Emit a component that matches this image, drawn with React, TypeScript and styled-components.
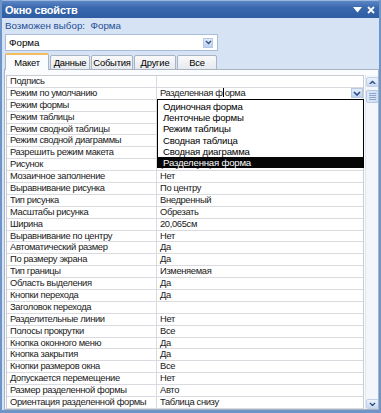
import React from "react";
import styled, { createGlobalStyle } from "styled-components";

const Global = createGlobalStyle`
  html, body { margin: 0; padding: 0; background: #dbe6f4; }
  * { box-sizing: border-box; }
`;

const FONT = `"Liberation Sans", Arial, sans-serif`;

const Window = styled.div`
  width: 381px;
  height: 413px;
  background: #d6e3f4;
  border-left: 2px solid #6f94c8;
  border-right: 2px solid #6f94c8;
  border-bottom: 3px solid #6f94c8;
  display: flex;
  flex-direction: column;
  overflow: hidden;
  font-family: ${FONT};
`;

const TitleBar = styled.div`
  height: 18px;
  flex: none;
  margin: 0 -2px;
  padding: 0 6px 0 5px;
  background: linear-gradient(#5b86c5, #3a68ad 40%, #2f5da3);
  border-top: 1px solid #9ab6de;
  display: flex;
  align-items: center;
  justify-content: space-between;
`;

const Title = styled.span`
  color: #fff;
  font-weight: bold;
  font-size: 11px;
  letter-spacing: -0.2px;
`;

const TitleIcons = styled.div`
  display: flex;
  align-items: center;
  gap: 5px;
`;

const Info = styled.div`
  color: #1f4e94;
  font-size: 9.8px;
  padding: 2px 0 0 3px;
  height: 14px;
  flex: none;
`;

const SelectBox = styled.div`
  margin: 2px 0 0 3px;
  width: 213px;
  height: 17px;
  flex: none;
  background: #fff;
  border: 1px solid #a9bdd8;
  display: flex;
  align-items: center;
  justify-content: space-between;
  padding: 0 4px 0 3px;
  font-size: 9.8px;
  color: #000;
`;

const DropBtn = styled.div<{ $w: number; $h: number }>`
  width: ${(p) => p.$w}px;
  height: ${(p) => p.$h}px;
  background: linear-gradient(#e3ecf9, #bcd0ee);
  border: 1px solid #b6c9e6;
  display: flex;
  align-items: center;
  justify-content: center;
`;

const Tabs = styled.div`
  display: flex;
  align-items: flex-end;
  margin: 2px 0 0 3px;
  height: 17px;
  flex: none;
`;

const Tab = styled.div<{ $w: number; $active?: boolean }>`
  width: ${(p) => p.$w}px;
  height: ${(p) => (p.$active ? 17 : 15)}px;
  margin-right: 1px;
  display: flex;
  align-items: center;
  justify-content: center;
  font-size: 9.4px;
  letter-spacing: -0.2px;
  color: #000;
  background: ${(p) => (p.$active ? "#fbfcfe" : "linear-gradient(#fafafa, #e6e9ee)")};
  border: 1px solid #a9b3c2;
  border-top: ${(p) => (p.$active ? "2px solid #f2bd62" : "1px solid #a9b3c2")};
  border-bottom: ${(p) => (p.$active ? "none" : "1px solid #a9b3c2")};
  position: relative;
  z-index: ${(p) => (p.$active ? 2 : 1)};
  border-radius: 2px 2px 0 0;
`;

const Panel = styled.div`
  flex: 1;
  margin: -1px 0 0 2px;
  background: #fbfcfe;
  border: 1px solid #a9b3c2;
  padding: 5px 0 0 1px;
  display: flex;
  overflow: hidden;
`;

const GridWrap = styled.div`
  position: relative;
  width: 358px;
  flex: none;
  border-top: 1px solid #c9ccd2;
  border-left: 1px solid #c9ccd2;
  border-right: 1px solid #c9ccd2;
  background: #fff;
`;

const Row = styled.div`
  display: grid;
  grid-template-columns: 150px 1fr;
  height: 11.9px;
  border-bottom: 1px solid #d9dbe0;
  font-size: 9.4px;
  letter-spacing: -0.35px;
  line-height: 10.9px;
  color: #1a1a1a;
`;

const Label = styled.div`
  padding-left: 3px;
  border-right: 1px solid #d9dbe0;
  white-space: nowrap;
  overflow: hidden;
`;

const Value = styled.div`
  padding-left: 3px;
  white-space: nowrap;
  overflow: hidden;
  display: flex;
  align-items: center;
  justify-content: space-between;
`;

const Caret = styled.span`
  display: inline-block;
  width: 1px;
  height: 10px;
  background: #000;
  vertical-align: -1px;
  margin: 0 0.5px;
`;

const List = styled.div`
  position: absolute;
  left: 150px;
  top: 23px;
  width: 207px;
  height: 69px;
  background: #fff;
  border: 1px solid #000;
  z-index: 5;
  padding-top: 1px;
`;

const Item = styled.div<{ $sel?: boolean }>`
  height: 11.2px;
  line-height: 11.2px;
  font-size: 9.6px;
  letter-spacing: -0.2px;
  padding-left: 5px;
  color: ${(p) => (p.$sel ? "#fff" : "#000")};
  background: ${(p) => (p.$sel ? "#050505" : "transparent")};
`;

const Scroll = styled.div`
  width: 16px;
  margin-left: 1px;
  background: #f3f6fa;
  border-left: 1px solid #e2e7ee;
  display: flex;
  flex-direction: column;
  align-items: center;
  padding-top: 1px;
  position: relative;
`;

const ScrollBtn = styled.div`
  width: 13px;
  height: 10px;
  margin-top: 1px;
  background: linear-gradient(#eef3fb, #c8d8f0);
  border: 1px solid #c2d1e8;
  border-radius: 2px;
  display: flex;
  align-items: center;
  justify-content: center;
`;

const Thumb = styled.div`
  width: 13px;
  height: 13px;
  margin-top: 3px;
  background: linear-gradient(90deg, #dfe8f6, #cddcf2);
  border: 1px solid #b4c7e4;
  border-radius: 2px;
  display: flex;
  flex-direction: column;
  align-items: center;
  justify-content: center;
  gap: 1px;
`;

const Grip = styled.div`
  width: 7px;
  height: 1px;
  background: #8ea7cc;
`;

const Spacer = styled.div`
  flex: 1;
`;

const Chevron = ({ up, size = 8 }: { up?: boolean; size?: number }) => (
  <svg width={size} height={size * 0.7} viewBox="0 0 8 5.6">
    <path
      d={up ? "M1 4.6 L4 1.6 L7 4.6" : "M1 1 L4 4 L7 1"}
      fill="none"
      stroke="#2a4d85"
      strokeWidth="1.6"
    />
  </svg>
);

const rows: [string, string][] = [
  ["Подпись", ""],
  ["Режим по умолчанию", "__CARET__"],
  ["Режим формы", ""],
  ["Режим таблицы", ""],
  ["Режим сводной таблицы", ""],
  ["Режим сводной диаграммы", ""],
  ["Разрешить режим макета", ""],
  ["Рисунок", "(отсутствует)"],
  ["Мозаичное заполнение", "Нет"],
  ["Выравнивание рисунка", "По центру"],
  ["Тип рисунка", "Внедренный"],
  ["Масштабы рисунка", "Обрезать"],
  ["Ширина", "20,065см"],
  ["Выравнивание по центру", "Нет"],
  ["Автоматический размер", "Да"],
  ["По размеру экрана", "Да"],
  ["Тип границы", "Изменяемая"],
  ["Область выделения", "Да"],
  ["Кнопки перехода", "Да"],
  ["Заголовок перехода", ""],
  ["Разделительные линии", "Нет"],
  ["Полосы прокрутки", "Все"],
  ["Кнопка оконного меню", "Да"],
  ["Кнопка закрытия", "Да"],
  ["Кнопки размеров окна", "Все"],
  ["Допускается перемещение", "Нет"],
  ["Размер разделенной формы", "Авто"],
  ["Ориентация разделенной формы", "Таблица снизу"],
];

const options = [
  "Одиночная форма",
  "Ленточные формы",
  "Режим таблицы",
  "Сводная таблица",
  "Сводная диаграмма",
  "Разделенная форма",
];

export default function App() {
  return (
    <>
      <Global />
      <Window>
        <TitleBar>
          <Title>Окно свойств</Title>
          <TitleIcons>
            <svg width="9" height="6" viewBox="0 0 9 6">
              <path d="M0 0 H9 L4.5 5.5 Z" fill="#fff" />
            </svg>
            <svg width="8" height="8" viewBox="0 0 8 8">
              <path d="M1 1 L7 7 M7 1 L1 7" stroke="#fff" strokeWidth="1.8" />
            </svg>
          </TitleIcons>
        </TitleBar>
        <Info>Возможен выбор:&nbsp; Форма</Info>
        <SelectBox>
          <span>Форма</span>
          <DropBtn $w={10} $h={10}>
            <Chevron size={7} />
          </DropBtn>
        </SelectBox>
        <Tabs>
          <Tab $w={44} $active>Макет</Tab>
          <Tab $w={40}>Данные</Tab>
          <Tab $w={42}>События</Tab>
          <Tab $w={42}>Другие</Tab>
          <Tab $w={40}>Все</Tab>
        </Tabs>
        <Panel>
          <GridWrap>
            {rows.map(([l, v]) => (
              <Row key={l}>
                <Label>{l}</Label>
                {v === "__CARET__" ? (
                  <Value>
                    <span>
                      Разделенная ф<Caret />орма
                    </span>
                    <DropBtn $w={12} $h={10}>
                      <Chevron size={8} />
                    </DropBtn>
                  </Value>
                ) : (
                  <Value>{v}</Value>
                )}
              </Row>
            ))}
            <List>
              {options.map((o, i) => (
                <Item key={o} $sel={i === options.length - 1}>
                  {o}
                </Item>
              ))}
            </List>
          </GridWrap>
          <Scroll>
            <ScrollBtn>
              <Chevron up size={7} />
            </ScrollBtn>
            <Thumb>
              <Grip />
              <Grip />
              <Grip />
              <Grip />
            </Thumb>
            <Spacer />
            <ScrollBtn>
              <Chevron size={7} />
            </ScrollBtn>
          </Scroll>
        </Panel>
      </Window>
    </>
  );
}
